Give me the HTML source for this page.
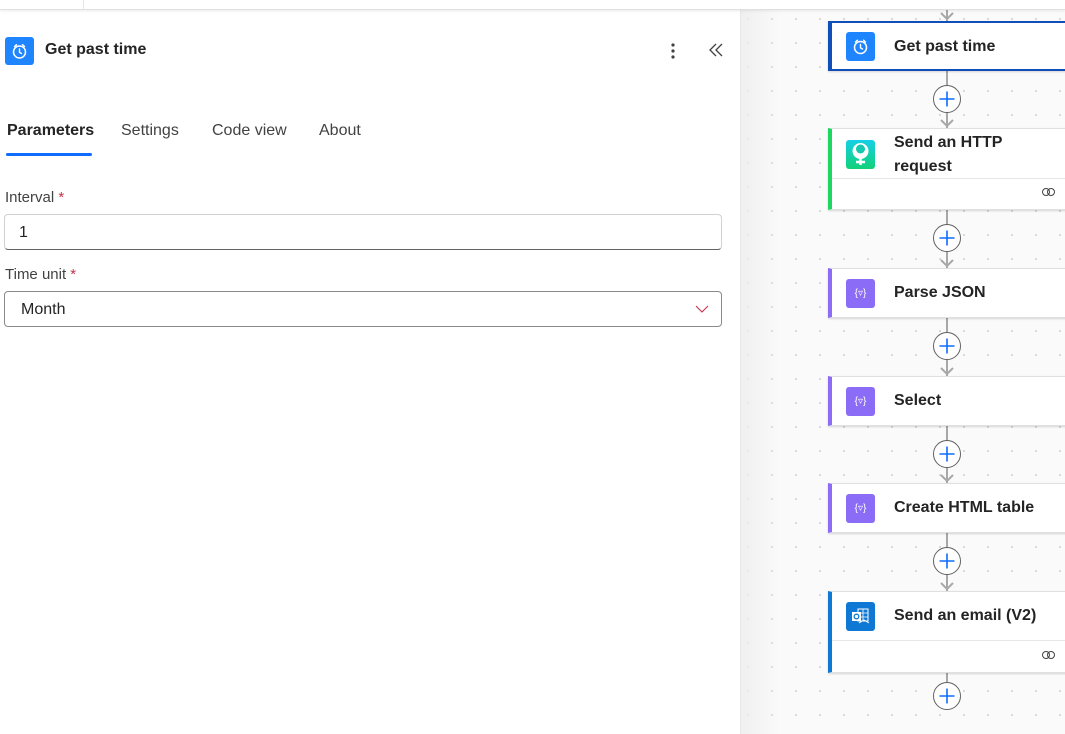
<!DOCTYPE html>
<html><head><meta charset="utf-8"><style>
*{box-sizing:border-box;margin:0;padding:0}
body{width:1065px;height:734px;overflow:hidden;background:#fff;font-family:"Segoe UI","Liberation Sans",sans-serif;color:#242424;position:relative}
.top{position:absolute;left:0;top:0;width:1065px;height:10px;background:#fff;border-bottom:1px solid #e0e0e0;box-shadow:0 1px 3px rgba(0,0,0,.08);z-index:5}
.top i{position:absolute;left:83px;top:0;width:1px;height:9px;background:#e5e5e5}
.canvas{position:absolute;left:740px;top:10px;width:325px;height:724px;background-color:#fafafa;background-image:radial-gradient(circle,#c8c8c8 0.7px,transparent 1.1px);background-size:24px 24px;background-position:-4px -3px}
.canvas:before{content:"";position:absolute;left:0;top:0;width:40px;height:100%;background:linear-gradient(to right,rgba(238,238,238,.9),rgba(250,250,250,0))}
.pdiv{position:absolute;left:740px;top:10px;width:1px;height:724px;background:#e8e8e8}
.hdr-ic{position:absolute;left:5px;top:37px;width:29px;height:28px;background:#1f85ff;border-radius:3px}
.title{position:absolute;left:45px;top:41px;font-size:16px;font-weight:600}
.tabs{position:absolute;top:122px;font-size:16px;color:#424242}
.lbl{position:absolute;left:5px;font-size:15px;color:#424242}
.lbl b{color:#c4314b;font-weight:400}
.inp{position:absolute;left:4px;width:718px;height:36px;border:1px solid #d1d1d1;border-bottom-color:#616161;border-radius:4px;font-size:16px;padding:9px 0 0 16px}
.vline{position:absolute;left:946px;width:2px;background:#a8a8a8}
.card{position:absolute;left:828px;width:240px;background:#fff;border:1px solid #e0e0e0;border-left:4px solid;box-shadow:0 1px 2px rgba(0,0,0,.15)}
.card .ic{position:absolute;left:14px;width:29px;height:29px;border-radius:3px}
.card .t{position:absolute;left:62px;font-size:16px;font-weight:600;line-height:24px}
.card .sep{position:absolute;left:0;right:0;height:1px;background:#e6e6e6}
.plus{position:absolute;left:933px;width:28px;height:28px}
.arr{position:absolute;left:940px;width:14px;height:8px}
</style></head><body>
<div class="top"><i></i></div>
<div class="hdr-ic"><svg width="29" height="28" viewBox="0 0 29 28"><circle cx="14.5" cy="15" r="6" fill="none" stroke="#fff" stroke-width="1.5"/><path d="M14.5 12v3.3l2 1.2M9.5 9.5l2-1.8M19.5 9.5l-2-1.8" stroke="#fff" stroke-width="1.4" fill="none" stroke-linecap="round"/></svg></div>
<div class="title">Get past time</div>
<svg style="position:absolute;left:668px;top:42px" width="10" height="18"><circle cx="5" cy="3" r="1.6" fill="#424242"/><circle cx="5" cy="9" r="1.6" fill="#424242"/><circle cx="5" cy="15" r="1.6" fill="#424242"/></svg>
<svg style="position:absolute;left:708px;top:42px" width="18" height="16"><path d="M8 2L2 8l6 6M14 2L8 8l6 6" stroke="#424242" stroke-width="1.3" fill="none"/></svg>
<div class="tabs" style="left:7px;color:#242424;font-weight:600">Parameters</div>
<div style="position:absolute;left:6px;top:153px;width:86px;height:3px;background:#0f6cfd;border-radius:2px"></div>
<div class="tabs" style="left:121px">Settings</div>
<div class="tabs" style="left:212px">Code view</div>
<div class="tabs" style="left:319px">About</div>
<div class="lbl" style="top:189px">Interval <b>*</b></div>
<div class="inp" style="top:214px;padding-left:14px">1</div>
<div class="lbl" style="top:266px">Time unit <b>*</b></div>
<div class="inp" style="top:291px;border-color:#8a8a8a">Month<svg style="position:absolute;right:12px;top:13px" width="14" height="9"><path d="M1 1l6 6 6-6" stroke="#c4314b" stroke-width="1.1" fill="none"/></svg></div>

<div class="canvas"></div>
<div class="pdiv"></div>

<div class="vline" style="top:10px;height:700px"></div>

<div class="card" style="top:21px;height:50px;border:2px solid #0f4fb8;border-left:4px solid #0f4fb8"><div class="ic" style="top:9px;left:14px;background:#1f85ff"><svg width="29" height="29" viewBox="0 0 29 28"><circle cx="14.5" cy="15" r="6" fill="none" stroke="#fff" stroke-width="1.5"/><path d="M14.5 12v3.3l2 1.2M9.5 9.5l2-1.8M19.5 9.5l-2-1.8" stroke="#fff" stroke-width="1.4" fill="none" stroke-linecap="round"/></svg></div><div class="t" style="top:12px;left:62px">Get past time</div></div>

<div class="card" style="top:128px;height:82px;border-left-color:#1ed760"><div class="ic" style="top:11px;background:linear-gradient(#14d0e6,#12d178)"><svg width="29" height="29"><circle cx="14.5" cy="11" r="8" fill="#fff"/><circle cx="14.5" cy="9" r="4.5" fill="#14c9b0"/><path d="M14.5 18v7M10 22h9" stroke="#fff" stroke-width="2.5"/></svg></div><div class="t" style="top:2px">Send an HTTP<br>request</div><div class="sep" style="top:49px"></div><svg style="position:absolute;left:208px;top:57px" width="18" height="12"><circle cx="6" cy="6" r="3.5" fill="none" stroke="#424242"/><circle cx="11" cy="6" r="3.5" fill="none" stroke="#424242"/></svg></div>

<div class="card" style="top:268px;height:50px;border-left-color:#8b6cf6"><div class="ic" style="top:10px;background:#8b6cf6;color:#fff;font-size:10px;text-align:center;line-height:29px">{▿}</div><div class="t" style="top:12px">Parse JSON</div></div>
<div class="card" style="top:376px;height:50px;border-left-color:#8b6cf6"><div class="ic" style="top:10px;background:#8b6cf6;color:#fff;font-size:10px;text-align:center;line-height:29px">{▿}</div><div class="t" style="top:12px">Select</div></div>
<div class="card" style="top:483px;height:50px;border-left-color:#8b6cf6"><div class="ic" style="top:10px;background:#8b6cf6;color:#fff;font-size:10px;text-align:center;line-height:29px">{▿}</div><div class="t" style="top:12px">Create HTML table</div></div>

<div class="card" style="top:591px;height:82px;border-left-color:#0f78d4"><div class="ic" style="top:10px;background:#0f78d4"><svg width="29" height="29"><rect x="12" y="7" width="10" height="12" fill="none" stroke="#fff" stroke-width="1"/><path d="M12 11h10M12 15h10M17 7v12" stroke="#fff" stroke-width=".8"/><rect x="6" y="10" width="9" height="9" fill="#fff"/><circle cx="10.5" cy="14.5" r="2.3" fill="none" stroke="#0f78d4" stroke-width="1.3"/><path d="M13 21l5-3 5 3" stroke="#fff" fill="none"/></svg></div><div class="t" style="top:12px">Send an email (V2)</div><div class="sep" style="top:48px"></div><svg style="position:absolute;left:208px;top:57px" width="18" height="12"><circle cx="6" cy="6" r="3.5" fill="none" stroke="#424242"/><circle cx="11" cy="6" r="3.5" fill="none" stroke="#424242"/></svg></div>

<svg class="arr" style="top:12px"><path d="M1 1l6 6 6-6" stroke="#a8a8a8" stroke-width="2" fill="none"/></svg>
<svg class="plus" style="top:85px" viewBox="0 0 28 28"><circle cx="14" cy="14" r="13.5" fill="#fff" stroke="#616161"/><path d="M14 6.5v15M6.5 14h15" stroke="#0f6cfd" stroke-width="1.6"/></svg><svg class="arr" style="top:119px"><path d="M1 1l6 6 6-6" stroke="#a8a8a8" stroke-width="2" fill="none"/></svg>
<svg class="plus" style="top:224px" viewBox="0 0 28 28"><circle cx="14" cy="14" r="13.5" fill="#fff" stroke="#616161"/><path d="M14 6.5v15M6.5 14h15" stroke="#0f6cfd" stroke-width="1.6"/></svg><svg class="arr" style="top:259px"><path d="M1 1l6 6 6-6" stroke="#a8a8a8" stroke-width="2" fill="none"/></svg>
<svg class="plus" style="top:332px" viewBox="0 0 28 28"><circle cx="14" cy="14" r="13.5" fill="#fff" stroke="#616161"/><path d="M14 6.5v15M6.5 14h15" stroke="#0f6cfd" stroke-width="1.6"/></svg><svg class="arr" style="top:367px"><path d="M1 1l6 6 6-6" stroke="#a8a8a8" stroke-width="2" fill="none"/></svg>
<svg class="plus" style="top:440px" viewBox="0 0 28 28"><circle cx="14" cy="14" r="13.5" fill="#fff" stroke="#616161"/><path d="M14 6.5v15M6.5 14h15" stroke="#0f6cfd" stroke-width="1.6"/></svg><svg class="arr" style="top:474px"><path d="M1 1l6 6 6-6" stroke="#a8a8a8" stroke-width="2" fill="none"/></svg>
<svg class="plus" style="top:547px" viewBox="0 0 28 28"><circle cx="14" cy="14" r="13.5" fill="#fff" stroke="#616161"/><path d="M14 6.5v15M6.5 14h15" stroke="#0f6cfd" stroke-width="1.6"/></svg><svg class="arr" style="top:582px"><path d="M1 1l6 6 6-6" stroke="#a8a8a8" stroke-width="2" fill="none"/></svg>
<svg class="plus" style="top:682px" viewBox="0 0 28 28"><circle cx="14" cy="14" r="13.5" fill="#fff" stroke="#616161"/><path d="M14 6.5v15M6.5 14h15" stroke="#0f6cfd" stroke-width="1.6"/></svg>
</body></html>
